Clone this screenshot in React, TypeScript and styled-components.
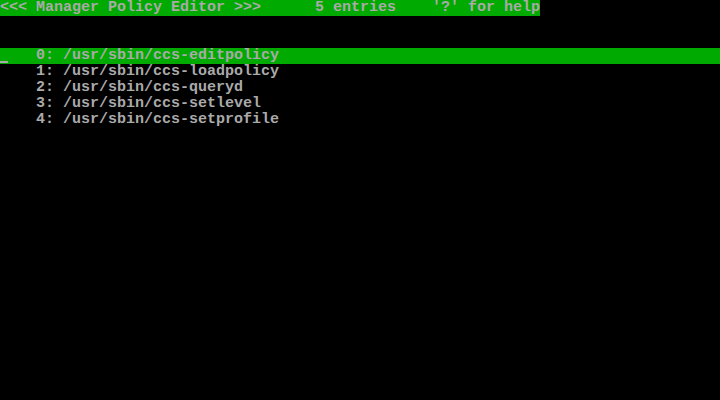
import styled, { createGlobalStyle } from 'styled-components'

const GlobalStyle = createGlobalStyle`
  html, body {
    margin: 0;
    padding: 0;
    background: #000;
  }
`

const Screen = styled('div')`
  width: 720px;
  height: 400px;
  overflow: hidden;
  background: #000;
  color: #aaaaaa;
  font-family: 'Liberation Mono', 'DejaVu Sans Mono', monospace;
  font-weight: bold;
  font-size: 15px;
  line-height: 16px;
  display: flex;
  flex-direction: column;
`

const Row = styled('div')<{ $selected?: boolean }>`
  height: 16px;
  white-space: pre;
  background: ${({ $selected }) => ($selected ? '#00aa00' : 'transparent')};
`

const StatusBar = styled(Row)`
  width: 540px;
  background: #00aa00;
`

const Cursor = styled('span')`
  display: inline-block;
  width: 8px;
  height: 16px;
  margin-right: 1px;
  vertical-align: top;
  background: linear-gradient(transparent 13px, #aaaaaa 13px, #aaaaaa 15px, transparent 15px);
`

const entries = [
  '/usr/sbin/ccs-editpolicy',
  '/usr/sbin/ccs-loadpolicy',
  '/usr/sbin/ccs-queryd',
  '/usr/sbin/ccs-setlevel',
  '/usr/sbin/ccs-setprofile',
]

function App() {
  const selected = 0

  return (
    <>
      <GlobalStyle />
      <Screen>
        <StatusBar>
          {"<<< Manager Policy Editor >>>      " + entries.length + " entries    '?' for help"}
        </StatusBar>
        <Row />
        <Row />
        {entries.map((path, i) => (
          <Row key={path} $selected={i === selected}>
            {i === selected ? <Cursor /> : ' '}
            {'   ' + i + ': ' + path}
          </Row>
        ))}
      </Screen>
    </>
  )
}

export default App
